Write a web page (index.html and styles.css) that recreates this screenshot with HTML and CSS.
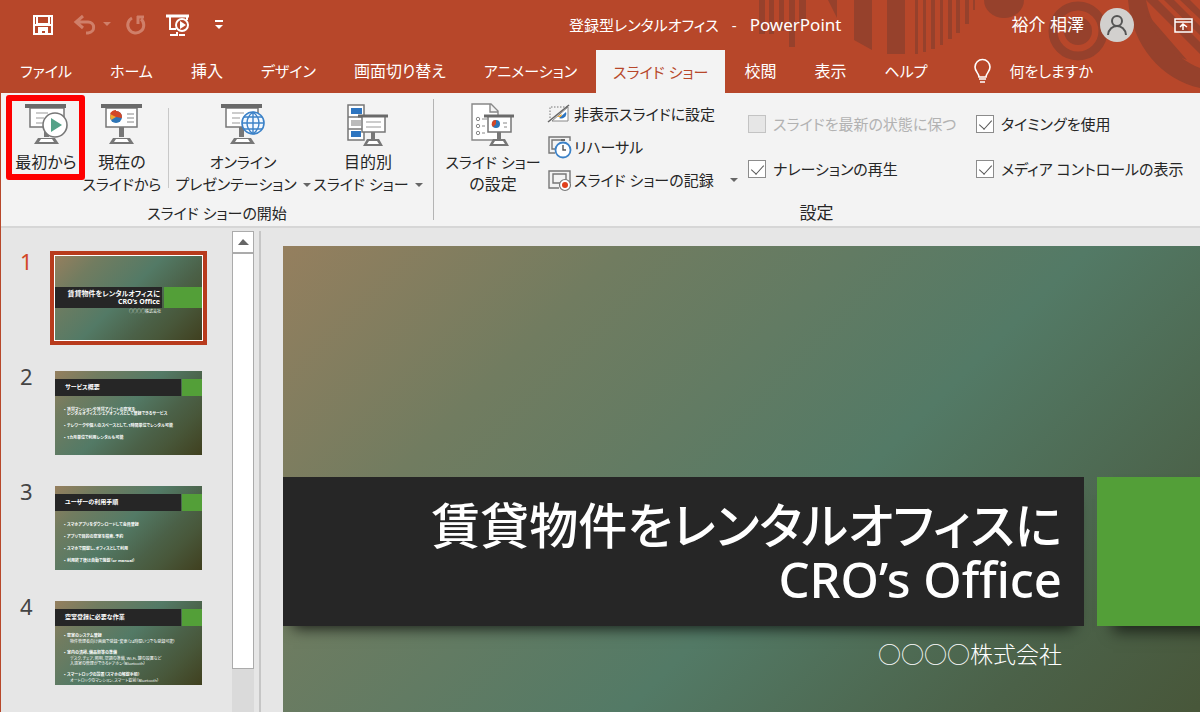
FILE: index.html
```html
<!DOCTYPE html>
<html lang="ja">
<head>
<meta charset="utf-8">
<title>登録型レンタルオフィス - PowerPoint</title>
<link rel="stylesheet" href="styles.css">
</head>
<body>
<div class="window">
  <header class="chrome">
    <svg class="chrome-art" viewBox="0 0 450 93" width="450" height="93" aria-hidden="true">
      <g fill="#96412c">
        <path d="M9 0h6v34H9zM19 0h5v34h-5zM29 0h5v31h-5zM39 0h6v47h-6zM49 0h7v24h-7zM78 0h9v18zM104 0h18v50l-18-10zM137 0h18v54h-18zM165 0h3v54h-3zM173 0h3v52h-3zM181 0h4v49h-4zM190 0h3v45h-3zM198 0h4v39h-4zM206 0h4v33h-4zM215 0h4v24h-4zM223 0h2v10h-2z"/>
        <path d="M234 0h40a20 18 0 0 1-40 0z"/>
        <circle cx="328" cy="31" r="14"/>
        <path d="M378 0c4 46 34 80 72 88V68c-26-10-48-36-54-68z"/>
        <path d="M396 0h12l42 42v12zM414 0h10l26 26v9zM430 0h10l10 10v9zM397 14l40 46-8-3c-14-10-26-24-32-43z"/>
      </g>
      <circle cx="328" cy="31" r="25" fill="none" stroke="#96412c" stroke-width="9"/>
    </svg>
    <div class="titlebar">
      <div class="quick">
        <button class="qbtn" aria-label="上書き保存"><svg width="20" height="20" viewBox="0 0 20 20"><path d="M1 1h18v18H1z" fill="none" stroke="#fff" stroke-width="2"/><path d="M4 1v8h12V1M1 10h18" fill="none" stroke="#fff" stroke-width="2"/><path d="M5 12h10v8h-3v-4H9v4H5z" fill="#fff"/></svg></button>
        <button class="qbtn undo" aria-label="元に戻す"><svg width="36" height="20" viewBox="0 0 36 20"><path d="M9 1L2 7l7 6M2 7h12c7 0 8 10 0 11h-2" fill="none" stroke="#d07f69" stroke-width="3"/><path d="M29 7h8l-4 4z" fill="#d07f69"/></svg></button>
        <button class="qbtn redo" aria-label="やり直し"><svg width="20" height="20" viewBox="0 0 20 20"><path d="M6 3a8 8 0 1 0 9 1M11 2h7M12 1v8" fill="none" stroke="#d07f69" stroke-width="3"/></svg></button>
        <button class="qbtn show" aria-label="先頭から開始"><svg width="24" height="23" viewBox="0 0 24 23"><path d="M0 2h23" stroke="#fff" stroke-width="3"/><path d="M4 3v12h6M21 3v3M4 21h6M13 21h6M11 18v4" fill="none" stroke="#fff" stroke-width="2"/><circle cx="16" cy="11" r="6" fill="#b7472a" stroke="#fff" stroke-width="2"/><path d="M14 7l6 4-6 4z" fill="#fff"/></svg></button>
        <button class="qbtn more" aria-label="クイック アクセスのカスタマイズ"><svg width="8" height="10" viewBox="0 0 8 10"><path d="M0 1h8" stroke="#fff" stroke-width="2"/><path d="M0 5h8L4 9z" fill="#fff"/></svg></button>
      </div>
      <div class="doc-title"><span>登録型レンタルオフィス</span><span>-</span><span class="app">PowerPoint</span></div>
      <div class="account">
        <span class="app">裕介 相澤</span>
        <svg class="avatar" width="34" height="34" viewBox="0 0 34 34"><circle cx="17" cy="17" r="17" fill="#d2d0ce"/><circle cx="17" cy="13" r="5" fill="none" stroke="#555" stroke-width="2"/><path d="M8 27c1-12 17-12 18 0" fill="none" stroke="#555" stroke-width="2"/></svg>
        <button class="qbtn" aria-label="リボンの表示オプション"><svg width="19" height="15" viewBox="0 0 19 15"><path d="M1 1h17v13H1zM1 4h17M9 12V6M6 9l3-3 4 3" fill="none" stroke="#fff" stroke-width="1.5"/></svg></button>
      </div>
    </div>
    <nav class="tabs">
      <button class="tab">ファイル</button>
      <button class="tab">ホーム</button>
      <button class="tab kanji">挿入</button>
      <button class="tab">デザイン</button>
      <button class="tab kanji">画面切り替え</button>
      <button class="tab">アニメーション</button>
      <button class="tab active">スライド ショー</button>
      <button class="tab kanji">校閲</button>
      <button class="tab kanji">表示</button>
      <button class="tab">ヘルプ</button>
      <button class="tab tell"><svg width="17" height="24" viewBox="0 0 17 24"><path d="M5 18c0-4-4-5-4-10a7 7 0 0 1 15 0c0 5-4 6-4 10zM5 20h7M6 23h5" fill="none" stroke="#fff" stroke-width="1.6"/></svg>何をしますか</button>
    </nav>
  </header>

  <section class="ribbon">
    <div class="group start">
      <div class="tools">
        <button class="big first">
          <svg width="44" height="44" viewBox="0 0 44 44"><path d="M6 5h34v19H6z" fill="#fff" stroke="#777" stroke-width="1.5"/><path d="M1 3h41" stroke="#6a6a6a" stroke-width="4"/><path d="M12 10h12M12 15h8M12 20h8" stroke="#999"/><path d="M20 24v10h5V24zM14 35h17l4 6H10z" fill="#777"/><path d="M17 36h11l2 3H15z" fill="#fff"/><circle cx="31" cy="22" r="12" fill="#fff" stroke="#777" stroke-width="1.6"/><path d="M27 15l11 7-11 7z" fill="#55a288"/></svg>
          <span class="label kanji">最初から</span>
          <span class="frame"></span>
        </button>
        <button class="big second">
          <svg width="42" height="44" viewBox="0 0 42 44"><path d="M5 5h31v19H5z" fill="#fff" stroke="#777" stroke-width="1.5"/><path d="M0 3h41" stroke="#6a6a6a" stroke-width="4"/><circle cx="15" cy="14" r="6" fill="#2e75b6"/><path d="M15 14V8a6 6 0 0 0-6 6l1 3z" fill="#f0a830"/><path d="M15 14V7a7 7 0 0 0-6 4z" fill="#d24726"/><path d="M15 14V8a6 6 0 0 1 6 7z" fill="#d24726"/><path d="M26 11h7M26 15h7M26 19h7" stroke="#888"/><path d="M18 24v10h5V24zM12 35h17l4 6H8z" fill="#777"/><path d="M15 36h11l2 3H13z" fill="#fff"/></svg>
          <span class="label"><span class="kanji">現在の</span><br>スライドから</span>
        </button>
        <i class="rule"></i>
        <button class="big online">
          <svg width="44" height="44" viewBox="0 0 44 44"><path d="M5 5h32v19H5z" fill="#fff" stroke="#777" stroke-width="1.5"/><path d="M0 3h41" stroke="#6a6a6a" stroke-width="4"/><path d="M11 10h12M11 15h8M11 20h8" stroke="#999"/><path d="M18 24v10h5V24zM13 35h17l4 6H9z" fill="#777"/><path d="M16 36h11l2 3H14z" fill="#fff"/><circle cx="32" cy="20" r="11" fill="#f3f9ff" stroke="#3c82c8" stroke-width="1.6"/><path d="M32 9v22M21 20h22M23 14h18M23 26h18M32 9c-8 6-8 16 0 22M32 9c8 6 8 16 0 22" fill="none" stroke="#3c82c8" stroke-width="1.4"/></svg>
          <span class="label">オンライン<br>プレゼンテーション<i class="caret"></i></span>
        </button>
        <button class="big custom">
          <svg width="42" height="44" viewBox="0 0 42 44"><path d="M1 2h16v35H1zM1 14h16M1 26h16" fill="#fff" stroke="#777" stroke-width="1.5"/><path d="M4 5h11v6H4zM4 28h10v6H4z" fill="#2e75c0"/><path d="M4 17h10v6H4z" fill="#bbb"/><path d="M15 13h23v16H15z" fill="#fff" stroke="#777" stroke-width="1.5"/><path d="M11 13h30" stroke="#6a6a6a" stroke-width="3"/><path d="M19 19h15M19 24h15" stroke="#999"/><path d="M24 29h4v8h-4zM20 36h12l4 7H16z" fill="#777"/><path d="M22 38h8l2 3H20z" fill="#fff"/></svg>
          <span class="label"><span class="kanji">目的別</span><br>スライド ショー<i class="caret"></i></span>
        </button>
      </div>
      <h2 class="group-name">スライド ショーの開始</h2>
    </div>
    <div class="group setup">
      <div class="tools">
        <button class="big config">
          <svg width="44" height="44" viewBox="0 0 44 44"><path d="M1 1h19l7 7v29H1zM19 1v8h8" fill="#fff" stroke="#888" stroke-width="1.4"/><g fill="none" stroke="#888"><circle cx="7" cy="16" r="1.7"/><circle cx="7" cy="23" r="1.7"/><circle cx="7" cy="30" r="1.7"/><path d="M11 16h5M11 23h3M11 30h3"/></g><path d="M17 13h23v16H17z" fill="#fff" stroke="#777" stroke-width="1.5"/><path d="M13 13h30" stroke="#6a6a6a" stroke-width="3"/><circle cx="25" cy="21" r="4" fill="#2e75b6"/><path d="M25 21v-4a4 4 0 0 0-3 7z" fill="#d24726"/><path d="M32 20h4M33 24h3" stroke="#888"/><path d="M26 29h4v8h-4zM22 36h12l4 7H18z" fill="#777"/><path d="M24 38h8l2 3H22z" fill="#fff"/></svg>
          <span class="label">スライド ショー<br><span class="kanji">の設定</span></span>
        </button>
        <div class="stack">
          <button class="small"><svg width="23" height="22" viewBox="0 0 23 22"><path d="M2 15V4h17" fill="none" stroke="#777" stroke-dasharray="1.5 1.5"/><path d="M20 4v14H4z" fill="#fff" stroke="#888"/><path d="M18 9a5 5 0 0 1-7 6z" fill="#2e75c0"/><path d="M0 19L21 2" stroke="#666" stroke-width="1.6"/><path d="M9 14l5-3-1 3z" fill="#f0a830"/></svg>非表示スライドに設定</button>
          <button class="small"><svg width="23" height="22" viewBox="0 0 23 22"><path d="M7 17H1V1h21v4M9 13H4V4h13" fill="none" stroke="#777" stroke-width="1.4"/><circle cx="15" cy="14" r="7.5" fill="#fff" stroke="#3c82c8" stroke-width="1.8"/><path d="M15 9v5h3M13 4h4" fill="none" stroke="#555" stroke-width="1.4"/></svg>リハーサル</button>
          <button class="small"><svg width="23" height="22" viewBox="0 0 23 22"><path d="M11 19H1V2h21v12M12 14H5V5h13v7" fill="none" stroke="#777" stroke-width="1.4"/><circle cx="17" cy="16" r="5.5" fill="#fff" stroke="#777" stroke-width="1.2"/><circle cx="17" cy="16" r="3" fill="#e0401c"/></svg>スライド ショーの記録<i class="caret far"></i></button>
        </div>
        <div class="checks">
          <label class="check off"><input type="checkbox" disabled>スライドを最新の状態に保つ</label>
          <label class="check"><input type="checkbox" checked>タイミングを使用</label>
          <label class="check"><input type="checkbox" checked>ナレーションの再生</label>
          <label class="check"><input type="checkbox" checked>メディア コントロールの表示</label>
        </div>
      </div>
      <h2 class="group-name kanji">設定</h2>
    </div>
  </section>

  <main class="work">
    <ol class="thumbs">
      <li class="item selected"><span class="num">1</span>
        <div class="thumb cover"><div class="t-row"><div class="t-bar">賃貸物件をレンタルオフィスに<br>CRO’s Office</div><div class="t-tag"></div></div><p class="t-sub">○○○○株式会社</p></div></li>
      <li class="item"><span class="num">2</span>
        <div class="thumb"><div class="t-row"><div class="t-bar">サービス概要</div><div class="t-tag"></div></div>
          <ul class="t-list"><li>賃貸マンションや賃貸アパートの空室を<br>レンタルオフィス、シェアオフィスとして登録できるサービス</li><li>テレワークや個人のスペースとして、1時間単位でレンタル可能</li><li>1カ月単位で利用レンタルも可能</li></ul></div></li>
      <li class="item"><span class="num">3</span>
        <div class="thumb"><div class="t-row"><div class="t-bar">ユーザーの利用手順</div><div class="t-tag"></div></div>
          <ul class="t-list"><li>スマホアプリをダウンロードして会員登録</li><li>アプリで目的の空室を検索、予約</li><li>スマホで開錠し、オフィスとして利用</li><li>利用終了後は自動で施錠（or manual）</li></ul></div></li>
      <li class="item"><span class="num">4</span>
        <div class="thumb"><div class="t-row"><div class="t-bar">空室登録に必要な作業</div><div class="t-tag"></div></div>
          <ul class="t-list dense"><li>空室のシステム登録<p>物件管理者向け画面で登録・変更（24時間いつでも登録可能）</p></li><li>室内の清掃、備品類等の準備<p>デスク、チェア、照明、空調の準備、Wi-Fi、鍵の設置など<br>入退室の管理ができるドアホン（Bluetooth）</p></li><li>スマートロックの設置（スマホの解錠手順）<p>オートロックのマンション、スマート錠前（Bluetooth）</p></li></ul></div></li>
    </ol>
    <div class="scroll"><button class="up" aria-label="上へ"><svg width="11" height="6" viewBox="0 0 11 6"><path d="M0 6l5-6 6 6z" fill="#666"/></svg></button><div class="grip"></div></div>
    <div class="canvas">
      <article class="slide">
        <div class="s-row"><h1 class="s-bar">賃貸物件をレンタルオフィスに<br>CRO’s Office</h1><div class="s-tag"></div></div>
        <p class="s-sub">○○○○株式会社</p>
      </article>
    </div>
  </main>
</div>
</body>
</html>
```
FILE: styles.css
```css
* { box-sizing: border-box; }
body {
  margin: 0;
  font: 15px/22px "Noto Sans", "Noto Sans CJK JP", sans-serif;
  font-feature-settings: "palt";
  color: #262626;
}
button { border: 0; margin: 0; padding: 0; background: none; font: inherit; font-feature-settings: inherit; color: inherit; white-space: nowrap; }
svg { display: block; flex: none; overflow: visible; }
h1, h2, p, ol, ul { margin: 0; padding: 0; font-weight: 400; list-style: none; }
.kanji { font-size: 16px; }
.app { font-size: 17px; }

.window { height: 100vh; display: flex; flex-direction: column; overflow: hidden; border-left: 1px solid #b7472a; background: #e6e6e6; }

.chrome { position: relative; background: #b7472a; color: #fff; }
.chrome-art { position: absolute; top: 0; right: 0; }
.titlebar { position: relative; height: 50px; display: grid; grid-template-columns: 568px 1fr auto; align-items: center; padding-right: 7px; }
.quick { display: flex; align-items: center; padding-left: 32px; }
.undo { margin-left: 21px; }
.redo { margin-left: 16px; }
.show { margin-left: 20px; }
.more { margin-left: 25px; }
.doc-title { display: flex; gap: 13px; }
.account { display: flex; align-items: center; height: 46px; }
.avatar { margin: 0 40px 0 16px; }

.tabs { position: relative; display: flex; height: 43px; padding-bottom: 1px; }
.tab { padding: 0 19px; }
.tab.active { background: #f3f3f3; color: #b7472a; padding: 0 17px; margin-bottom: -1px; }
.tell { display: flex; align-items: center; gap: 18px; margin-left: 9px; }

.ribbon { display: flex; height: 135px; background: #f3f3f3; border-bottom: 2px solid #d6d6d6; }
.group { display: flex; flex-direction: column; padding: 10px 0 2px; }
.start { flex: none; width: 432px; position: relative; }
.start .tools { padding-left: 6px; }
.start::after { content: ""; position: absolute; right: -1px; top: 6px; bottom: 6px; width: 1px; background: #b4b4b4; }
.setup { flex: 1; }
.setup .tools { padding-left: 14px; }
.tools { flex: 1; display: flex; align-items: flex-start; }
.group-name { line-height: 22px; text-align: center; }
.group-name:not(.kanji) { font-size: 15px; }
.group-name.kanji { font-size: 17px; }
.big { display: flex; flex-direction: column; align-items: center; gap: 4px; flex: none; }
.first { position: relative; z-index: 1; width: 78px; }
.frame { position: absolute; inset: -8px 0 -7px -1px; border: 6px solid #fe0000; border-radius: 3px; }
.second { width: 74px; }
.rule { align-self: flex-start; width: 1px; height: 80px; margin: 5px 8px 0 9px; background: #c8c8c8; }
.online { width: 132px; }
.custom { width: 118px; }
.config { width: 92px; }
.caret { display: inline-block; margin-left: 6px; vertical-align: 3px; border: 4px solid transparent; border-top-color: #666; border-bottom: 0; }
.caret.far { margin-left: 13px; }
.stack { display: flex; flex-direction: column; gap: 11px; margin-left: 9px; width: 200px; flex: none; }
.small { display: flex; align-items: center; gap: 3px; height: 22px; }
.checks { display: grid; grid-template-columns: 213px auto; column-gap: 15px; row-gap: 23px; padding-top: 10px; }
.check { display: flex; align-items: center; gap: 7px; white-space: nowrap; }
.check input { appearance: none; position: relative; flex: none; width: 18px; height: 18px; margin: 0; border: 1px solid #8c8c8c; background: #fff; }
.check input:checked::after { content: ""; position: absolute; left: 5px; top: 1px; width: 6px; height: 11px; border: solid #555; border-width: 0 1px 1px 0; transform: rotate(42deg); }
.off { color: #b2b2b2; }
.check input:disabled { background: #e6e6e6; border-color: #c3c3c3; }

.work { flex: 1; min-height: 0; display: flex; }
.thumbs { width: 231px; padding: 28px 0 0 19px; display: flex; flex-direction: column; gap: 31px; }
.item { display: grid; grid-template-columns: 35px 147px; }
.num { font-size: 22px; line-height: 24px; margin-top: -7px; color: #444; }
.selected .num { color: #d24726; }
.thumb, .slide { background: linear-gradient(135deg, #957f5e, #717c60 20%, #537a66 47%, #4b6148 68%, #48573a 80%, #40401f); }
.thumb { width: 147px; height: 84px; padding-top: 8px; overflow: hidden; color: #fff; }
.cover { padding-top: 31px; }
.selected .thumb { outline: 4px solid #b83b1d; outline-offset: 1px; box-shadow: 0 0 0 1px #fff; }
.t-row { display: grid; grid-template-columns: 126px 1fr; column-gap: 1px; height: 17px; }
.cover .t-row { grid-template-columns: 107px 1fr; column-gap: 2px; height: 21px; }
.t-bar { background: #262626; padding-left: 10px; font-size: 6px; line-height: 16px; font-weight: 700; white-space: nowrap; }
.cover .t-bar { padding: 3px 2px 0 0; font-size: 7px; line-height: 8px; text-align: right; }
.t-tag, .s-tag { background: #539f38; }
.t-sub { font-size: 4px; line-height: 8px; padding-right: 41px; text-align: right; }
.t-list { padding: 12px 0 0 12px; display: grid; gap: 8px; font-size: 4px; line-height: 4px; font-weight: 700; white-space: nowrap; }
.t-list li::before { content: "•"; float: left; margin-left: -3px; }
.t-list.dense { padding-top: 7px; gap: 6px; line-height: 6px; }
.dense p { padding-left: 3px; font-size: 4px; line-height: 5px; }

.scroll { width: 22px; margin-top: 3px; background: #dadada; display: flex; flex-direction: column; }
.up { height: 22px; display: grid; place-items: center; background: #fff; border: 1px solid #ababab; }
.grip { height: 416px; background: #fff; border: 1px solid #ababab; }
.canvas { flex: 1; min-width: 0; margin: 3px 0 0 5px; padding: 15px 0 0 22px; border-left: 2px solid #c6c6c6; overflow: hidden; }
.slide { width: 1100px; height: 619px; padding-top: 231px; overflow: hidden; color: #fff; }
.s-row { display: grid; grid-template-columns: 801px 1fr; column-gap: 13px; }
.s-bar { background: #262626; padding: 21px 22px 20px; text-align: right; font-size: 49px; line-height: 54px; font-weight: 500; box-shadow: 0 12px 14px -10px rgba(0, 0, 0, .8); }
.s-tag { box-shadow: 10px 12px 14px -6px rgba(0, 0, 0, .6); }
.s-sub { width: 801px; padding: 12px 22px 0; text-align: right; font-size: 23px; line-height: 32px; font-weight: 300; }
```
